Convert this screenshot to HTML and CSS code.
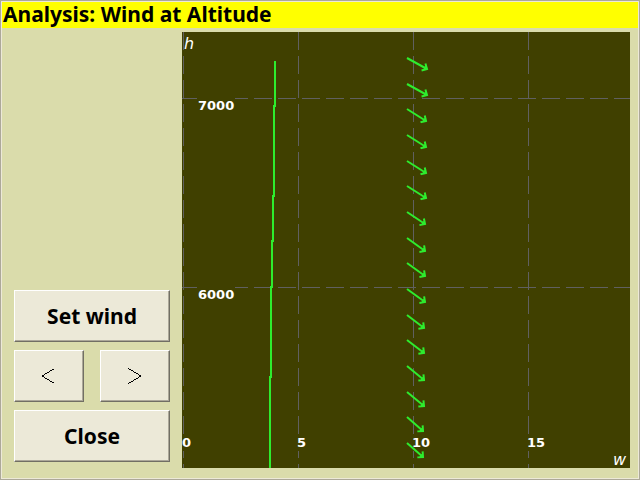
FILE: index.html
```html
<!DOCTYPE html>
<html lang="en">
<head>
<meta charset="utf-8">
<title>Analysis: Wind at Altitude</title>
<link rel="stylesheet" href="styles.css">
</head>
<body>
<main class="window">
  <h1 class="title">Analysis: Wind at Altitude</h1>
  <div class="content">
    <div class="controls">
      <button class="button wide" type="button">Set wind</button>
      <button class="button step" type="button" aria-label="Previous"><svg class="chevron" viewBox="0 0 16 16"><path d="M13.5 0.5L1 8L13.5 15.5"/></svg></button>
      <button class="button step" type="button" aria-label="Next"><svg class="chevron" viewBox="0 0 16 16"><path d="M1.5 0.5L14 8L1.5 15.5"/></svg></button>
      <button class="button wide" type="button">Close</button>
    </div>
    <svg class="chart" viewBox="0 0 448 436" role="img" aria-label="Wind speed and direction by altitude">
      <defs>
        <marker id="head" viewBox="-8 -5 10 10" refX="0" refY="0" markerWidth="10" markerHeight="10" markerUnits="userSpaceOnUse" orient="auto">
          <path class="barbs" d="M-4 -4L0 0L-4 4M-2 -2V2"/>
        </marker>
      </defs>
      <g class="grid">
        <path d="M1.5 0V436M116.5 0V436M231.5 0V436M346.5 0V436M0 66.5H448M0 255.5H448"/>
      </g>
      <g class="label-back">
        <rect x="15" y="66" width="38" height="17"/>
        <rect x="15" y="255" width="38" height="17"/>
        <rect x="0" y="402" width="10" height="17"/>
        <rect x="115" y="402" width="11" height="17"/>
        <rect x="230" y="402" width="19" height="17"/>
        <rect x="345" y="402" width="19" height="17"/>
      </g>
      <path class="profile" d="M93 29V74H92V164H91V209H90V255H89V345H88V436"/>
      <g class="arrows">
        <path d="M225 26L245 37"/>
        <path d="M225 52L245 63"/>
        <path d="M225 77L244 89"/>
        <path d="M225 103L244 115"/>
        <path d="M225 129L244 141"/>
        <path d="M225 154L244 166"/>
        <path d="M225 180L243 192"/>
        <path d="M225 206L243 219"/>
        <path d="M225 231L243 244"/>
        <path d="M225 257L243 270"/>
        <path d="M225 283L242 296"/>
        <path d="M225 308L242 321"/>
        <path d="M225 334L242 348"/>
        <path d="M225 360L242 374"/>
        <path d="M225 385L241 399"/>
        <path d="M225 411L241 425"/>
      </g>
      <g class="labels">
        <text x="16" y="78">7000</text>
        <text x="16" y="267">6000</text>
        <text x="0" y="415">0</text>
        <text x="115" y="415">5</text>
        <text x="230" y="415">10</text>
        <text x="345" y="415">15</text>
      </g>
      <g class="axis-names">
        <text x="2" y="17">h</text>
        <text x="431" y="433">w</text>
      </g>
    </svg>
  </div>
</main>
</body>
</html>
```
FILE: styles.css
```css
* { box-sizing: border-box; }

body {
  margin: 0;
  font-family: "Noto Sans", "DejaVu Sans Condensed", sans-serif;
}

.window {
  display: flex;
  flex-direction: column;
  min-height: 100vh;
  background: #dadcab;
  border: 1px solid #aca899;
  box-shadow: inset 0 0 0 1px #ece9d8;
  padding: 1px;
}

.title {
  margin: 0;
  padding: 0 1px 2px;
  background: #ffff00;
  color: #000;
  font-size: 21px;
  line-height: 24px;
  font-weight: bold;
}

.content {
  display: grid;
  grid-template-columns: 156px 1fr;
  gap: 12px;
  flex: 1;
  padding: 4px 8px 10px 12px;
}

.controls {
  display: grid;
  grid-template-columns: 70px 70px;
  grid-auto-rows: 52px;
  justify-content: space-between;
  align-content: end;
  row-gap: 8px;
  padding-bottom: 6px;
}

.button {
  margin: 0;
  padding: 0;
  background: #ece9d8;
  border: 1px solid;
  border-color: #fff #716f64 #716f64 #fff;
  box-shadow: inset -1px -1px 0 #aca899;
  border-radius: 0;
  color: #000;
  font-family: inherit;
  font-size: 21px;
  font-weight: bold;
}

.wide { grid-column: 1 / -1; }

.step {
  display: flex;
  align-items: center;
  justify-content: center;
}

.chevron {
  width: 16px;
  height: 16px;
  fill: none;
  stroke: #000;
  shape-rendering: crispEdges;
}

.chart {
  display: block;
  width: 100%;
  background: #404000;
}

.grid {
  stroke: #606060;
  stroke-dasharray: 18 6;
  shape-rendering: crispEdges;
}

.label-back { fill: #404000; }

.profile {
  fill: none;
  stroke: #2eec2e;
  stroke-width: 2;
  shape-rendering: crispEdges;
}

.arrows,
.barbs {
  fill: none;
  stroke: #2eec2e;
  stroke-width: 2;
}

.arrows path { marker-end: url(#head); }

.labels {
  fill: #fff;
  font-family: "DejaVu Sans", sans-serif;
  font-size: 13px;
  font-weight: bold;
}

.axis-names {
  fill: #fff;
  font-family: "DejaVu Sans", sans-serif;
  font-size: 16px;
  font-style: italic;
}
```
